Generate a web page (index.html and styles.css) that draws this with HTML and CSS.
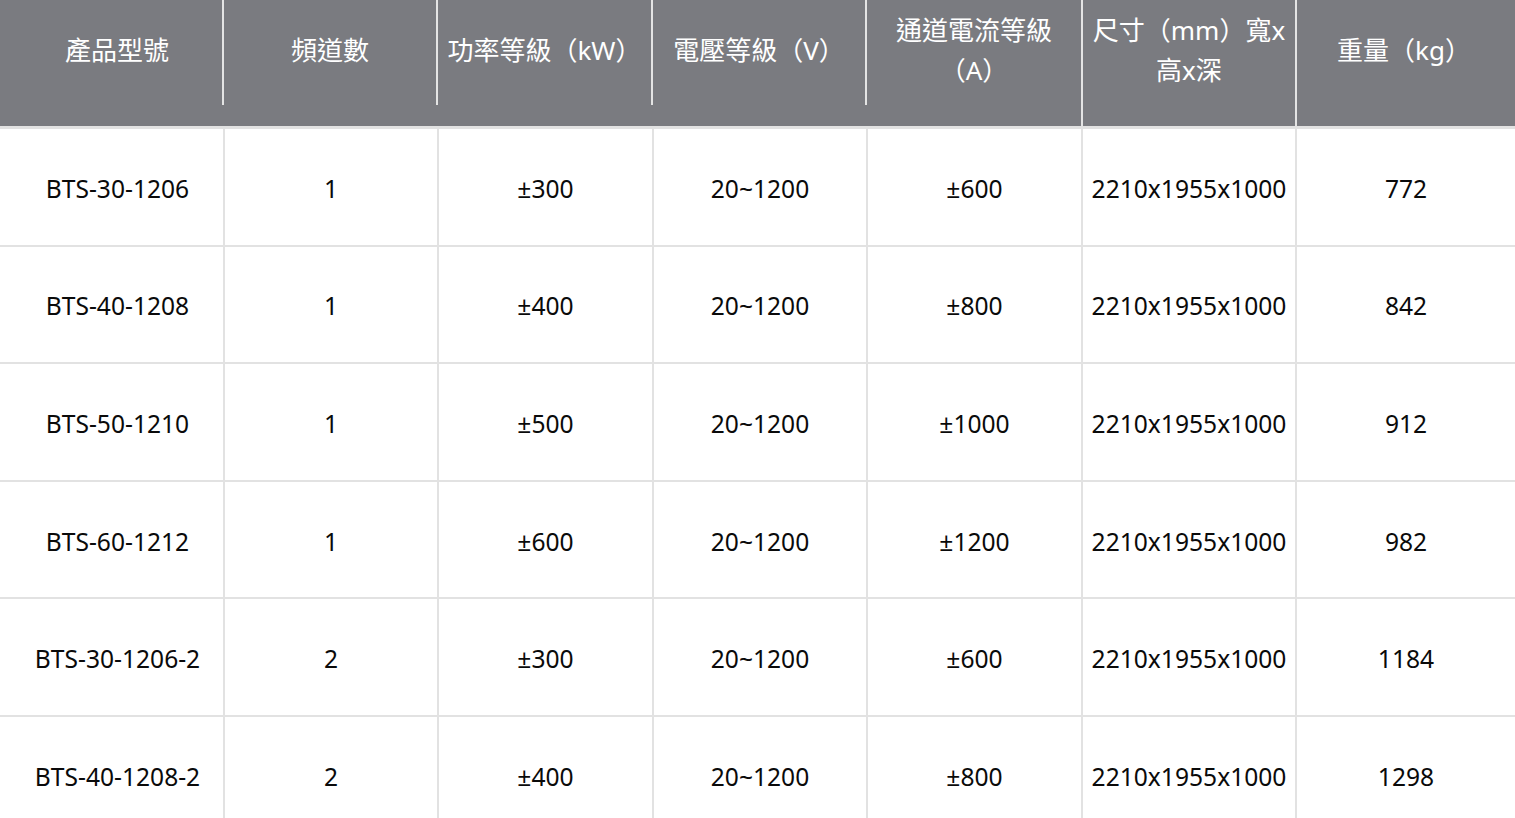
FILE: index.html
```html
<!DOCTYPE html>
<html lang="zh-Hant">
<head>
<meta charset="utf-8">
<title>規格表</title>
<link rel="stylesheet" href="styles.css">
</head>
<body>
<table class="spec">
  <colgroup>
    <col class="c1"><col class="c2"><col class="c3"><col class="c4"><col class="c5"><col class="c6"><col class="c7">
  </colgroup>
  <thead>
    <tr>
      <th class="short first"><div class="hc">產品型號</div></th>
      <th class="short"><div class="hc">頻道數</div></th>
      <th class="short"><div class="hc">功率等級（kW）</div></th>
      <th class="short"><div class="hc">電壓等級（V）</div></th>
      <th><div class="hc">通道電流等級（A）</div></th>
      <th class="full"><div class="hc">尺寸（mm）寬x高x深</div></th>
      <th class="last"><div class="hc">重量（kg）</div></th>
    </tr>
  </thead>
  <tbody>
    <tr><td>BTS-30-1206</td><td>1</td><td>±300</td><td>20~1200</td><td>±600</td><td>2210x1955x1000</td><td>772</td></tr>
    <tr><td>BTS-40-1208</td><td>1</td><td>±400</td><td>20~1200</td><td>±800</td><td>2210x1955x1000</td><td>842</td></tr>
    <tr><td>BTS-50-1210</td><td>1</td><td>±500</td><td>20~1200</td><td>±1000</td><td>2210x1955x1000</td><td>912</td></tr>
    <tr><td>BTS-60-1212</td><td>1</td><td>±600</td><td>20~1200</td><td>±1200</td><td>2210x1955x1000</td><td>982</td></tr>
    <tr><td>BTS-30-1206-2</td><td>2</td><td>±300</td><td>20~1200</td><td>±600</td><td>2210x1955x1000</td><td>1184</td></tr>
    <tr><td>BTS-40-1208-2</td><td>2</td><td>±400</td><td>20~1200</td><td>±800</td><td>2210x1955x1000</td><td>1298</td></tr>
  </tbody>
</table>
</body>
</html>
```

FILE: styles.css
```css
html, body {
  margin: 0;
  padding: 0;
  background: #ffffff;
}
body {
  font-family: "Noto Sans", "Noto Sans CJK TC", "Open Sans", sans-serif;
  overflow: hidden;
}
.spec {
  width: 1515px;
  border-collapse: collapse;
  table-layout: fixed;
}
.c1 { width: 224px; }
.c2 { width: 214px; }
.c3 { width: 215px; }
.c4 { width: 214px; }
.c5 { width: 215px; }
.c6 { width: 214px; }
.c7 { width: 219px; }

.spec th {
  background: #7a7b80;
  color: #ffffff;
  font-weight: normal;
  font-size: 26px;
  line-height: 40px;
  height: 126px;
  padding: 0;
  vertical-align: top;
  border-bottom: 3px solid #e2e2e2;
}
.spec th.full {
  border-left: 2px solid #e4e4e4;
  border-right: 2px solid #e4e4e4;
}
.hc {
  height: 105px;
  box-sizing: border-box;
  padding: 0 8px 6px;
  display: flex;
  align-items: center;
  justify-content: center;
  text-align: center;
}
.short .hc {
  border-right: 2px solid #e4e4e4;
}
.first .hc {
  padding-left: 20px;
}
.last .hc {
  padding-right: 12px;
}
.spec td {
  height: 112.6px;
  padding: 3px 4px 0;
  text-align: center;
  vertical-align: middle;
  font-size: 24.6px;
  color: #0a0a0a;
  border: 2px solid #e2e2e2;
  white-space: nowrap;
}
.spec td:first-child {
  border-left: none;
  padding-left: 16px;
}
.spec td:last-child { border-right: none; }
```
